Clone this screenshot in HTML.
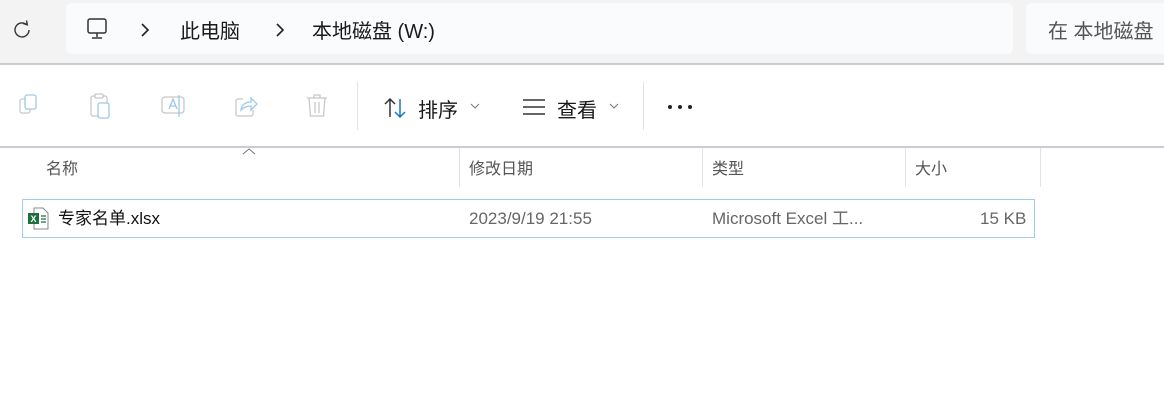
<!DOCTYPE html><html><head><meta charset="utf-8"><style>
body{margin:0;width:1164px;height:414px;background:#fff;position:relative;overflow:hidden;font-family:"Liberation Sans","Noto Sans CJK SC",sans-serif;}
.a{position:absolute;line-height:24px}
.top{left:0;top:0;width:1164px;height:63px;background:#f3f3f3;border-bottom:2px solid #c9cdd3}
.addr{left:66px;top:3px;width:947px;height:51px;background:#fafbfc;border-radius:6px}
.search{left:1026px;top:3px;width:160px;height:51px;background:#fafbfc;border-radius:6px}
.t{font-size:20px;color:#1a1a1a;white-space:nowrap}
.hline{left:0;top:146px;width:1164px;height:2px;background:#c9cdd3}
.h{font-size:16px;color:#555;top:158px}
.sep{top:148px;width:1px;height:39px;background:#e3e3e3}
.row{left:22px;top:199px;width:1011px;height:37px;border:1px solid #9fcdf0}
.g{font-size:17px;color:#666;top:207px;white-space:nowrap}
</style></head><body>
<div class="a top"></div>
<div class="a addr"></div>
<div class="a search"></div>
<svg class="a" style="left:11px;top:19px" width="22" height="22" viewBox="0 0 22 22"><path d="M16 6A7 7 0 1 0 18 11" fill="none" stroke="#333" stroke-width="1.4"/><path d="M12 4.5L16.3 5.8 15.5 1.5" fill="none" stroke="#333" stroke-width="1.4"/></svg>
<svg class="a" style="left:86px;top:17px" width="22" height="24" viewBox="0 0 22 24"><rect x="2" y="2" width="18" height="14" rx="2" fill="none" stroke="#333" stroke-width="1.5"/><path d="M11 16v4M6 21h10" stroke="#333" stroke-width="1.5"/></svg>
<svg class="a" style="left:140px;top:23px" width="10" height="14"><path d="M2 1l6 6-6 6" fill="none" stroke="#222" stroke-width="1.6"/></svg>
<div class="a t" style="left:180px;top:20px">此电脑</div>
<svg class="a" style="left:275px;top:23px" width="10" height="14"><path d="M2 1l6 6-6 6" fill="none" stroke="#222" stroke-width="1.6"/></svg>
<div class="a t" style="left:312px;top:20px">本地磁盘 (W:)</div>
<div class="a t" style="left:1048px;top:20px;color:#555">在 本地磁盘</div>
<svg class="a" style="left:17px;top:93px" width="26" height="26"><rect x="3" y="6" width="10" height="14" rx="2" fill="none" stroke="#c8c8c8" stroke-width="1.3"/><rect x="8" y="2" width="11" height="14" rx="2" fill="#fff" stroke="#9cc8ec" stroke-width="1.3"/></svg>
<svg class="a" style="left:89px;top:93px" width="26" height="28"><rect x="2" y="3" width="16" height="20" rx="2" fill="none" stroke="#c8c8c8" stroke-width="1.3"/><rect x="6" y="1" width="8" height="4" rx="1" fill="#fff" stroke="#c8c8c8" stroke-width="1.3"/><rect x="9" y="10" width="11" height="15" rx="2" fill="#fff" stroke="#9cc8ec" stroke-width="1.3"/></svg>
<svg class="a" style="left:160px;top:93px" width="28" height="28"><rect x="2" y="4" width="22" height="16" rx="3" fill="none" stroke="#c8c8c8" stroke-width="1.3"/><path d="M9 16l4-10 4 10M10.5 13h5" fill="none" stroke="#9cc8ec" stroke-width="1.3"/><path d="M19 2v22" stroke="#9cc8ec" stroke-width="1.3"/></svg>
<svg class="a" style="left:233px;top:93px" width="28" height="28"><path d="M10 6H5a2 2 0 0 0-2 2v13a2 2 0 0 0 2 2h13a2 2 0 0 0 2-2v-4" fill="none" stroke="#c8c8c8" stroke-width="1.3"/><path d="M8 17c1-6 5-8 10-8V5l6 6-6 6v-4c-4 0-7 1-10 4z" fill="none" stroke="#9cc8ec" stroke-width="1.3"/></svg>
<svg class="a" style="left:305px;top:93px" width="26" height="28"><path d="M2 5h20M9 5V2h6v3M4 5l1.5 18h13L20 5M10 9v11M14 9v11" fill="none" stroke="#c8c8c8" stroke-width="1.3"/></svg>
<div class="a" style="left:357px;top:82px;width:1px;height:48px;background:#e3e3e3"></div>
<svg class="a" style="left:383px;top:96px" width="26" height="24"><path d="M7 21V3M2 8l5-5 5 5" fill="none" stroke="#333" stroke-width="1.5"/><path d="M17 3v18M12 16l5 5 5-5" fill="none" stroke="#1a73c8" stroke-width="1.5"/></svg>
<div class="a t" style="left:418px;top:99px">排序</div>
<svg class="a" style="left:470px;top:103px" width="10" height="6"><path d="M1 1l4 4 4-4" fill="none" stroke="#777" stroke-width="1"/></svg>
<svg class="a" style="left:522px;top:98px" width="24" height="18"><path d="M1 2h22M1 9h22M1 16h22" stroke="#333" stroke-width="1.5"/></svg>
<div class="a t" style="left:557px;top:99px">查看</div>
<svg class="a" style="left:609px;top:103px" width="10" height="6"><path d="M1 1l4 4 4-4" fill="none" stroke="#777" stroke-width="1"/></svg>
<div class="a" style="left:643px;top:82px;width:1px;height:48px;background:#e3e3e3"></div>
<svg class="a" style="left:667px;top:103px" width="28" height="8"><circle cx="3" cy="4" r="2" fill="#222"/><circle cx="13" cy="4" r="2" fill="#222"/><circle cx="23" cy="4" r="2" fill="#222"/></svg>
<div class="a hline"></div>
<svg class="a" style="left:242px;top:148px" width="14" height="8"><path d="M1 6l6-5 6 5" fill="none" stroke="#777" stroke-width="1"/></svg>
<div class="a h" style="left:46px">名称</div>
<div class="a sep" style="left:459px"></div>
<div class="a h" style="left:469px">修改日期</div>
<div class="a sep" style="left:702px"></div>
<div class="a h" style="left:712px">类型</div>
<div class="a sep" style="left:905px"></div>
<div class="a h" style="left:915px">大小</div>
<div class="a sep" style="left:1040px"></div>
<div class="a row"></div>
<svg class="a" style="left:26px;top:206px" width="24" height="24"><path d="M8 2h9l5 5v16H8z" fill="#fff" stroke="#888" stroke-width="1"/><rect x="2" y="7" width="11" height="11" fill="#1d6f42"/><text x="4.5" y="16" font-size="9" font-weight="bold" fill="#fff" font-family="Liberation Sans">X</text><path d="M15 10h5M15 13h5M15 16h5" stroke="#1d6f42" stroke-width="1.2"/></svg>
<div class="a" style="left:58px;top:207px;font-size:17px;color:#111">专家名单.xlsx</div>
<div class="a g" style="left:469px">2023/9/19 21:55</div>
<div class="a g" style="left:712px">Microsoft Excel 工...</div>
<div class="a g" style="left:980px">15 KB</div>
</body></html>
